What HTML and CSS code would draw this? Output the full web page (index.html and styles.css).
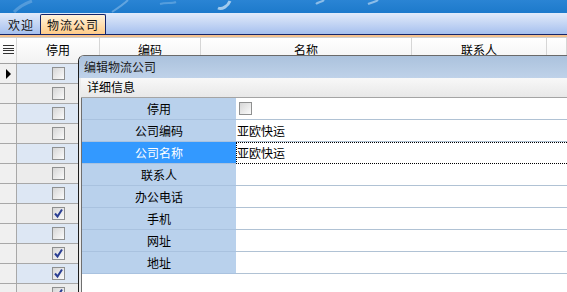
FILE: index.html
```html
<!DOCTYPE html>
<html lang="zh-CN">
<head>
    <meta charset="UTF-8">
    <title>物流公司</title>
    <link rel="stylesheet" href="styles.css">
</head>
<body>
    <div class="banner">
        <svg width="567" height="13" viewBox="0 0 567 13">
            <path d="M14 12 C20 6 26 3 32 1" stroke="#7fb6e6" stroke-width="3" fill="none" opacity="0.5"/>
            <path d="M112 12 C118 8 124 4 128 0" stroke="#9cc8ee" stroke-width="2" fill="none" opacity="0.5"/>
            <path d="M160 4 C166 2 172 4 176 2" stroke="#9cc8ee" stroke-width="2" fill="none" opacity="0.4"/>
            <path d="M218 8 C222 10 228 6 230 1" stroke="#d8ebfa" stroke-width="3" fill="none" opacity="0.7"/>
            <path d="M316 4 C318 2 322 2 324 0" stroke="#cfe4f7" stroke-width="2" fill="none" opacity="0.6"/>
            <path d="M368 4 C372 2 376 2 378 0" stroke="#cfe4f7" stroke-width="2" fill="none" opacity="0.6"/>
        </svg>
    </div>

    <div class="tabbar">
        <span class="tab">欢迎</span>
        <span class="tab active">物流公司</span>
    </div>
    <div class="tabline"></div>

    <div class="grid">
        <div class="grid-head">
            <div class="hcell rh"><span class="menu-icon"></span></div>
            <div class="hcell">停用</div>
            <div class="hcell">编码</div>
            <div class="hcell">名称</div>
            <div class="hcell">联系人</div>
            <div class="hcell"></div>
        </div>
        <div class="grid-body" id="grid-body"></div>
    </div>

    <div class="dialog">
        <div class="dlg-title">编辑物流公司</div>
        <div class="dlg-body">
            <div class="section-title">详细信息</div>
            <div class="props">
                <div class="prop">
                    <div class="prop-label">停用</div>
                    <div class="prop-value"><span class="check"></span></div>
                </div>
                <div class="prop">
                    <div class="prop-label">公司编码</div>
                    <div class="prop-value">亚欧快运</div>
                </div>
                <div class="prop selected">
                    <div class="prop-label">公司名称</div>
                    <div class="prop-value">亚欧快运</div>
                </div>
                <div class="prop">
                    <div class="prop-label">联系人</div>
                    <div class="prop-value"></div>
                </div>
                <div class="prop">
                    <div class="prop-label">办公电话</div>
                    <div class="prop-value"></div>
                </div>
                <div class="prop">
                    <div class="prop-label">手机</div>
                    <div class="prop-value"></div>
                </div>
                <div class="prop">
                    <div class="prop-label">网址</div>
                    <div class="prop-value"></div>
                </div>
                <div class="prop">
                    <div class="prop-label">地址</div>
                    <div class="prop-value"></div>
                </div>
            </div>
        </div>
    </div>

    <script>
        // 停用 flags for the rows behind the dialog
        const stopped = [false, false, false, false, false, false, false, true, false, true, true, true];
        const tick = '<svg width="11" height="11" viewBox="0 0 11 11"><path d="M2 5.5 L4.5 8.5 L9 1.5" stroke="#2b3f93" stroke-width="2" fill="none"/></svg>';

        const body = document.getElementById('grid-body');
        stopped.forEach(function (on, i) {
            const row = document.createElement('div');
            row.className = 'grid-row' + (i % 2 === 0 ? ' odd' : '');
            row.innerHTML =
                '<div class="cell rh">' + (i === 0 ? '<span class="arrow"></span>' : '') + '</div>' +
                '<div class="cell stop"><span class="check">' + (on ? tick : '') + '</span></div>' +
                '<div class="cell"></div><div class="cell"></div><div class="cell"></div><div class="cell"></div>';
            body.appendChild(row);
        });
    </script>
</body>
</html>
```

FILE: styles.css
```css
body {
    margin: 0;
    width: 567px;
    height: 292px;
    overflow: hidden;
    position: relative;
    font-family: "Noto Sans CJK SC", "Liberation Sans", sans-serif;
    font-size: 12px;
    line-height: 14px;
    color: #000;
    background: #fff;
}
.banner {
    height: 13px;
    background: linear-gradient(#2a84d4, #1d7acb);
}
.banner svg {
    display: block;
}
.tabbar {
    height: 21px;
    display: flex;
    align-items: flex-end;
    padding-left: 2px;
    background: linear-gradient(#e2ebfa, #a6c0ee);
    border-bottom: 1px solid #14246a;
}
.tab {
    height: 19px;
    line-height: 19px;
    padding: 0 5px 0 6px;
    letter-spacing: 1px;
    color: #111;
}
.tab.active {
    margin-left: 1px;
    padding: 0 6px;
    border: 1px solid #14246a;
    border-bottom: none;
    border-radius: 2px 2px 0 0;
    background: linear-gradient(#fff3dc, #ffcb88);
}
.tabline {
    height: 2px;
    background: #f3c18e;
    border-bottom: 1px solid #d0d0d0;
}
.grid-head,
.grid-row {
    display: grid;
    grid-template-columns: 17px 83px 101px 211px 135px 1fr;
}
.grid-head {
    height: 25px;
    background: linear-gradient(#ffffff, #f2f2f2);
    border-bottom: 1px solid #a0a0a0;
}
.hcell {
    display: flex;
    align-items: center;
    justify-content: center;
    border-right: 1px solid #d6d6d6;
    padding-bottom: 2px;
}
.menu-icon {
    width: 11px;
    height: 7px;
    border-top: 1px solid #333;
    border-bottom: 1px solid #333;
    background: linear-gradient(#333, #333) 0 2px / 100% 1px no-repeat,
                linear-gradient(#333, #333) 0 4px / 100% 1px no-repeat;
}
.grid-row {
    height: 19px;
    border-bottom: 1px solid #a8a8a8;
}
.cell {
    display: flex;
    align-items: center;
    justify-content: center;
    border-right: 1px solid #a8a8a8;
    background: #ececec;
}
.grid-row.odd .cell {
    background: #dde7f4;
}
.grid-row .cell.rh {
    background: #f0f0f0;
    justify-content: flex-start;
    padding-left: 6px;
}
.arrow {
    width: 0;
    height: 0;
    border-top: 5px solid transparent;
    border-bottom: 5px solid transparent;
    border-left: 5px solid #000;
}
.check {
    box-sizing: border-box;
    width: 13px;
    height: 13px;
    display: flex;
    align-items: center;
    justify-content: center;
    border: 1px solid #8f9090;
    background: linear-gradient(135deg, #d6d6d6, #fbfbfb);
}
.check svg {
    display: block;
}

/* edit dialog floating over the grid */
.dialog {
    position: absolute;
    left: 78px;
    top: 55px;
    right: -6px;
    bottom: -6px;
    border-left: 1px solid #1c1c1c;
    border-top: 1px solid #6a6a6a;
    border-top-left-radius: 6px;
    background: #ececec;
    display: flex;
    flex-direction: column;
    overflow: hidden;
}
.dlg-title {
    height: 22px;
    line-height: 22px;
    padding-left: 5px;
    color: #1a1a1a;
    background: linear-gradient(#abc2dd, #bfd2e9);
}
.dlg-body {
    flex: 1;
    display: flex;
    flex-direction: column;
    padding-left: 2px;
}
.section-title {
    height: 19px;
    line-height: 18px;
    padding-left: 6px;
    background: linear-gradient(#f8f8f8, #e8e8e8);
    border-bottom: 1px solid #a4a4a4;
}
.props {
    flex: 1;
    background: #fff;
    border-left: 1px solid #6f6f6f;
}
.prop {
    display: flex;
    height: 22px;
}
.prop-label {
    box-sizing: border-box;
    width: 154px;
    line-height: 21px;
    text-align: center;
    background: #b9d1ec;
    border-bottom: 1px solid #a9c2df;
}
.prop-value {
    box-sizing: border-box;
    flex: 1;
    display: flex;
    align-items: center;
    padding-left: 1px;
    border-bottom: 1px solid #b0c2d4;
}
.prop-value .check {
    margin-left: 2px;
}
.prop.selected .prop-label {
    background: #3399ff;
    color: #fff;
}
.prop.selected .prop-value {
    border: 1px dotted #000;
    padding-left: 0;
}
```
